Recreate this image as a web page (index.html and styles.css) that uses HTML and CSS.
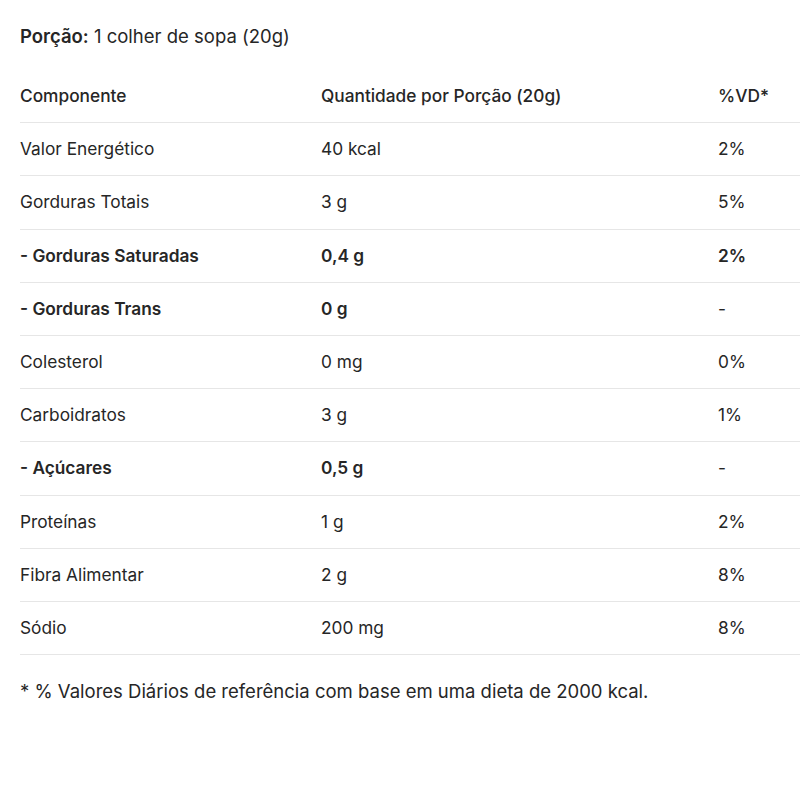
FILE: index.html
```html
<!DOCTYPE html>
<html lang="pt-BR">
<head>
<meta charset="utf-8">
<link rel="stylesheet" href="styles.css">
</head>
<body>
<div class="page">
  <p class="portion"><strong>Porção:</strong> 1 colher de sopa (20g)</p>
  <div class="table">
    <div class="row head"><span>Componente</span><span>Quantidade por Porção (20g)</span><span>%VD*</span></div>
    <div class="row"><span>Valor Energético</span><span>40 kcal</span><span>2%</span></div>
    <div class="row"><span>Gorduras Totais</span><span>3 g</span><span>5%</span></div>
    <div class="row bold"><span>- Gorduras Saturadas</span><span>0,4 g</span><span>2%</span></div>
    <div class="row bold"><span>- Gorduras Trans</span><span>0 g</span><span class="dash">-</span></div>
    <div class="row"><span>Colesterol</span><span>0 mg</span><span>0%</span></div>
    <div class="row"><span>Carboidratos</span><span>3 g</span><span>1%</span></div>
    <div class="row bold"><span>- Açúcares</span><span>0,5 g</span><span class="dash">-</span></div>
    <div class="row"><span>Proteínas</span><span>1 g</span><span>2%</span></div>
    <div class="row"><span>Fibra Alimentar</span><span>2 g</span><span>8%</span></div>
    <div class="row"><span>Sódio</span><span>200 mg</span><span>8%</span></div>
  </div>
  <p class="note">* % Valores Diários de referência com base em uma dieta de 2000 kcal.</p>
</div>
</body>
</html>
```

FILE: styles.css
```css
html, body {
  margin: 0;
  padding: 0;
  background: #ffffff;
}
body {
  font-family: Inter, "Noto Sans", sans-serif;
  font-size: 17.3px;
  color: #262626;
}
.page {
  padding: 24px 0 0 20px;
}
.portion {
  margin: 0;
  line-height: 24px;
  font-size: 18.5px;
}
.portion strong {
  font-weight: 600;
}
.table {
  margin-top: 22px;
}
.row {
  display: grid;
  grid-template-columns: 301px 397px 1fr;
  padding: 16px 0;
  line-height: 20.2px;
  border-bottom: 1px solid #e6e6e6;
}
.row.head {
  font-weight: 500;
}
.row.bold {
  font-weight: 600;
}
.row .dash {
  font-weight: 400;
}
.note {
  margin: 24px 0 0;
  line-height: 24px;
  font-size: 18.5px;
}
```
